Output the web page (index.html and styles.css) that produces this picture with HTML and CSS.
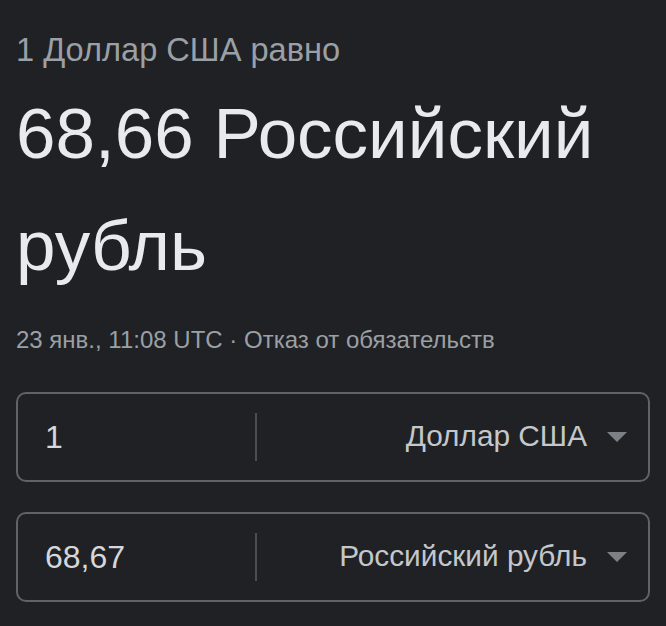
FILE: index.html
```html
<!DOCTYPE html>
<html lang="ru">
<head>
<meta charset="utf-8">
<title>Конвертер валют</title>
<link rel="stylesheet" href="styles.css">
</head>
<body>
<div class="card">
  <div class="sub">1 Доллар США равно</div>
  <div class="big">68,66 Российский рубль</div>
  <div class="meta">23 янв., 11:08 UTC · <span class="link">Отказ от обязательств</span></div>
  <div class="converter">
    <div class="box">
      <div class="amount">1</div>
      <div class="divider"></div>
      <div class="select">
        <span class="cur">Доллар США</span>
        <svg class="arrow" width="20" height="10" viewBox="0 0 20 10"><path d="M0 0h20L10 10z"/></svg>
      </div>
    </div>
    <div class="box">
      <div class="amount">68,67</div>
      <div class="divider"></div>
      <div class="select">
        <span class="cur">Российский рубль</span>
        <svg class="arrow" width="20" height="10" viewBox="0 0 20 10"><path d="M0 0h20L10 10z"/></svg>
      </div>
    </div>
  </div>
</div>
</body>
</html>
```
FILE: styles.css
```css
html, body {
  margin: 0;
  background: #202124;
}
body {
  font-family: "Liberation Sans", Arial, sans-serif;
}
.card {
  padding: 30px 16px 0 16px;
}
.sub {
  font-size: 32.6px;
  line-height: 40px;
  color: #9aa0a6;
}
.big {
  margin-top: 8px;
  font-size: 71px;
  line-height: 112px;
  color: #e8eaed;
}
.meta {
  margin-top: 22px;
  font-size: 24px;
  line-height: 32px;
  color: #9aa0a6;
}
.converter {
  margin-top: 36px;
  display: flex;
  flex-direction: column;
  gap: 30px;
}
.box {
  box-sizing: border-box;
  height: 90px;
  border: 2px solid #5f6368;
  border-radius: 10px;
  display: flex;
  align-items: center;
}
.amount {
  width: 210px;
  padding-left: 27px;
  color: #d5d7da;
  font-size: 32px;
  line-height: 40px;
}
.divider {
  width: 2px;
  height: 48px;
  background: #4a4d51;
}
.select {
  flex: 1;
  display: flex;
  align-items: center;
  justify-content: flex-end;
  gap: 20px;
  padding-right: 21px;
  padding-bottom: 3px;
  color: #c4c7cb;
  font-size: 29.8px;
  line-height: 40px;
}
.arrow {
  fill: #7d8186;
  margin-top: 3px;
}
```
